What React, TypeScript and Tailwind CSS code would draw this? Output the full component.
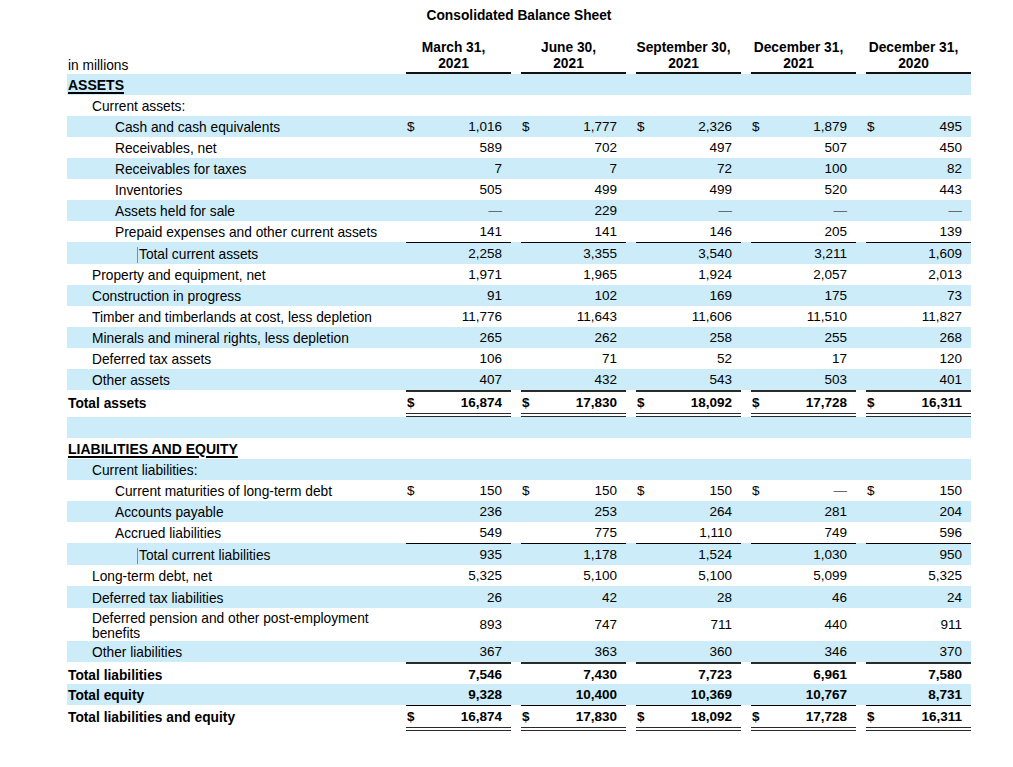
import React from "react";

type Row = {
  label: string;
  level: 0 | 1 | 2 | 3;
  vals?: string[];
  blue?: boolean;
  bold?: boolean;
  dollar?: boolean;
  top?: 0 | 1 | 2;
  dbl?: boolean;
  h?: number;
  heading?: boolean;
  mark?: boolean;
};

const rows: Row[] = [
  { label: "ASSETS", level: 0, blue: true, heading: true },
  { label: "Current assets:", level: 1 },
  { label: "Cash and cash equivalents", level: 2, blue: true, dollar: true, vals: ["1,016", "1,777", "2,326", "1,879", "495"] },
  { label: "Receivables, net", level: 2, vals: ["589", "702", "497", "507", "450"] },
  { label: "Receivables for taxes", level: 2, blue: true, vals: ["7", "7", "72", "100", "82"] },
  { label: "Inventories", level: 2, vals: ["505", "499", "499", "520", "443"] },
  { label: "Assets held for sale", level: 2, blue: true, vals: ["—", "229", "—", "—", "—"] },
  { label: "Prepaid expenses and other current assets", level: 2, vals: ["141", "141", "146", "205", "139"] },
  { label: "Total current assets", level: 3, blue: true, top: 1, mark: true, vals: ["2,258", "3,355", "3,540", "3,211", "1,609"] },
  { label: "Property and equipment, net", level: 1, vals: ["1,971", "1,965", "1,924", "2,057", "2,013"] },
  { label: "Construction in progress", level: 1, blue: true, vals: ["91", "102", "169", "175", "73"] },
  { label: "Timber and timberlands at cost, less depletion", level: 1, vals: ["11,776", "11,643", "11,606", "11,510", "11,827"] },
  { label: "Minerals and mineral rights, less depletion", level: 1, blue: true, vals: ["265", "262", "258", "255", "268"] },
  { label: "Deferred tax assets", level: 1, vals: ["106", "71", "52", "17", "120"] },
  { label: "Other assets", level: 1, blue: true, vals: ["407", "432", "543", "503", "401"] },
  { label: "Total assets", level: 0, bold: true, dollar: true, top: 2, dbl: true, vals: ["16,874", "17,830", "18,092", "17,728", "16,311"] },
  { label: "", level: 0, blue: true },
  { label: "LIABILITIES AND EQUITY", level: 0, heading: true },
  { label: "Current liabilities:", level: 1, blue: true },
  { label: "Current maturities of long-term debt", level: 2, dollar: true, vals: ["150", "150", "150", "—", "150"] },
  { label: "Accounts payable", level: 2, blue: true, vals: ["236", "253", "264", "281", "204"] },
  { label: "Accrued liabilities", level: 2, vals: ["549", "775", "1,110", "749", "596"] },
  { label: "Total current liabilities", level: 3, blue: true, top: 1, mark: true, vals: ["935", "1,178", "1,524", "1,030", "950"] },
  { label: "Long-term debt, net", level: 1, vals: ["5,325", "5,100", "5,100", "5,099", "5,325"] },
  { label: "Deferred tax liabilities", level: 1, blue: true, h: 22, vals: ["26", "42", "28", "46", "24"] },
  { label: "Deferred pension and other post-employment benefits", level: 1, h: 33, vals: ["893", "747", "711", "440", "911"] },
  { label: "Other liabilities", level: 1, blue: true, vals: ["367", "363", "360", "346", "370"] },
  { label: "Total liabilities", level: 0, bold: true, top: 2, h: 20, vals: ["7,546", "7,430", "7,723", "6,961", "7,580"] },
  { label: "Total equity", level: 0, bold: true, blue: true, vals: ["9,328", "10,400", "10,369", "10,767", "8,731"] },
  { label: "Total liabilities and equity", level: 0, bold: true, dollar: true, top: 1, dbl: true, vals: ["16,874", "17,830", "18,092", "17,728", "16,311"] },
];

const indent: Record<number, string> = {
  0: "pl-[1px]",
  1: "pl-[25px]",
  2: "pl-[48px]",
  3: "pl-[70px]",
};

function TopLine({ top, show }: { top: number; show: boolean }) {
  if (top === 0) return null;
  if (top === 2)
    return <div className={show ? "ml-[10px] h-[2px] bg-[#2a2a2a]" : "h-[2px]"} />;
  return <div className={show ? "ml-[10px] h-[1px] bg-black" : "h-[1px]"} />;
}

function Dbl({ show }: { show: boolean }) {
  if (!show) return <div className="h-[4px]" />;
  return (
    <div className="ml-[10px] flex h-[4px] flex-col justify-between bg-white">
      <div className="h-[1px] bg-[#2a2a2a]" />
      <div className="h-[1px] bg-[#2a2a2a]" />
    </div>
  );
}

function TableRow({ r }: { r: Row }) {
  const top = r.top ?? 0;
  const h = r.h ?? 21;
  const wrap = h > 30;
  return (
    <div className={`flex ${r.blue ? "bg-[#ccecfa]" : "bg-white"}`}>
      <div className="flex w-[329px] flex-col">
        <TopLine top={top} show={false} />
        <div
          className={`flex items-center pt-[2px] text-[13.75px] ${indent[r.level]} ${r.bold || r.heading ? "font-bold" : ""}`}
          style={{ height: h }}
        >
          {r.mark ? (
            <span className="whitespace-nowrap border-l border-[#8a8a8a] pl-[1px] leading-[16px]">{r.label}</span>
          ) : r.heading ? (
            <span className="whitespace-nowrap text-[14px] underline decoration-[1.5px] underline-offset-[2px]">{r.label}</span>
          ) : wrap ? (
            <span className="pr-[20px] leading-[15px]">{r.label}</span>
          ) : (
            <span className="whitespace-nowrap leading-[15px]">{r.label}</span>
          )}
        </div>
        {r.dbl && <Dbl show={false} />}
      </div>
      {[0, 1, 2, 3, 4].map((i) => {
        const v = r.vals ? r.vals[i] : "";
        return (
          <div key={i} className="flex w-[115px] flex-col">
            <TopLine top={top} show={true} />
            <div
              className={`flex items-center justify-between pl-[11px] pr-[9px] pt-[2px] ${r.bold ? "font-bold" : ""}`}
              style={{ height: h }}
            >
              <span>{r.dollar ? "$" : ""}</span>
              <span className={v === "—" ? "text-[#6b6b6b]" : ""}>{v}</span>
            </div>
            {r.dbl && <Dbl show={true} />}
          </div>
        );
      })}
    </div>
  );
}

const headers: [string, string][] = [
  ["March 31,", "2021"],
  ["June 30,", "2021"],
  ["September 30,", "2021"],
  ["December 31,", "2021"],
  ["December 31,", "2020"],
];

export default function App() {
  return (
    <div
      className="min-h-[767px] w-[1013px] bg-white text-[13.5px] text-black"
      style={{ fontFamily: '"Liberation Sans", Arial, sans-serif' }}
    >
      <div className="ml-[67px] w-[904px]">
        <div className="flex h-[30px] items-center justify-center pt-[2px] text-[13.75px] font-bold">
          Consolidated Balance Sheet
        </div>
        <div className="mt-[9px] flex">
          <div className="flex w-[329px] items-end pl-[1px] text-[13.75px] leading-[16px]">
            <span>in millions</span>
          </div>
          {headers.map((hd, i) => (
            <div key={i} className="flex w-[115px] flex-col">
              <div className="pt-[1px] text-center text-[13.75px] font-bold leading-[16px]">
                <div>{hd[0]}</div>
                <div>{hd[1]}</div>
              </div>
              <div className="ml-[10px] h-[2px] bg-[#111]" />
            </div>
          ))}
        </div>
        {rows.map((r, i) => (
          <TableRow key={i} r={r} />
        ))}
      </div>
    </div>
  );
}
